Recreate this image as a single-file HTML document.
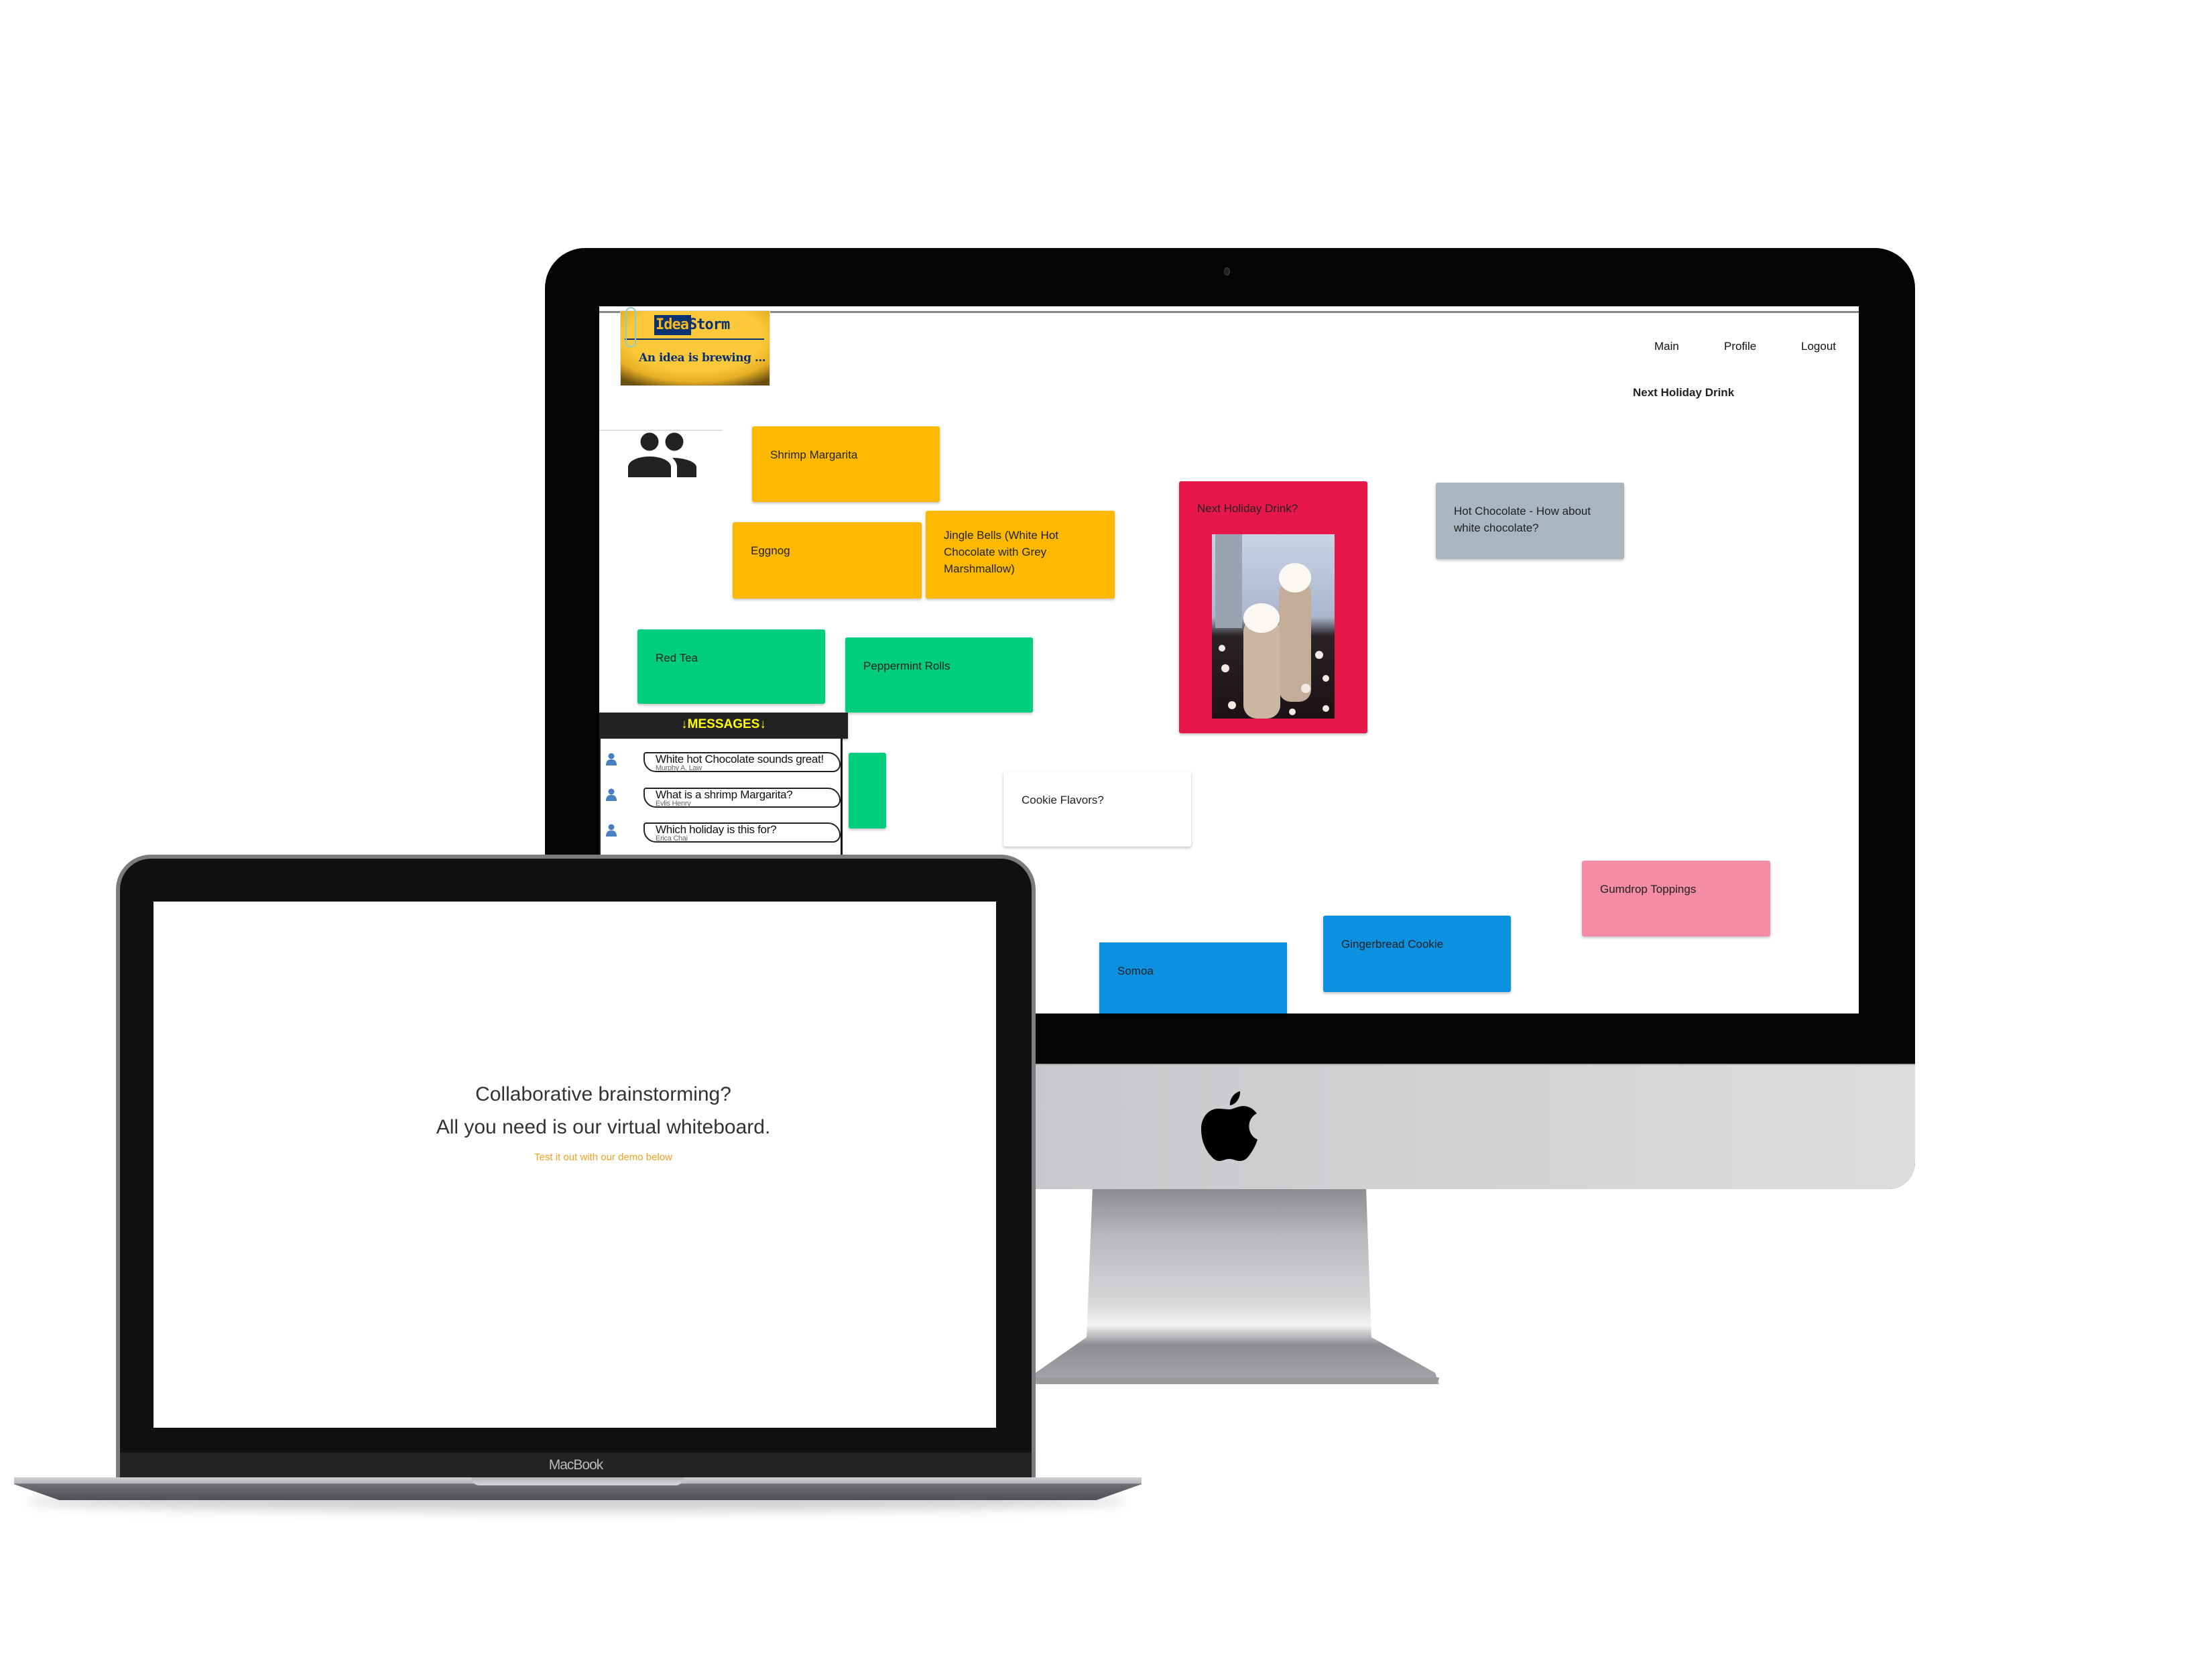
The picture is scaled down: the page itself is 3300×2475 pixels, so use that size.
<!DOCTYPE html>
<html><head><meta charset="utf-8"><style>
*{margin:0;padding:0;box-sizing:border-box}
body{width:3300px;height:2475px;background:#fff;position:relative;overflow:hidden;font-family:"Liberation Sans",Arial,sans-serif}
.a{position:absolute}
.n{position:absolute;font-size:17px;color:#222;padding:30px 27px;line-height:25px;box-shadow:0 2px 4px rgba(0,0,0,.25);border-radius:3px}
.y{background:#FDB900}.g{background:#00CE7C}.b{background:#0B91E0}
.msg{position:absolute;left:960px;width:294px;height:30px;border:2px solid #222;border-radius:6px 30px 18px 30px/6px 30px 18px 30px;font-size:17px;color:#111;padding-left:16px;line-height:17px;letter-spacing:-0.3px}
.msg small{display:block;font-size:11px;color:#666;line-height:10px}
.pi{position:absolute;left:904px;width:16px;height:20px}
</style></head><body>

<!-- iMac stand -->
<div class="a" style="left:1541px;top:1770px;width:606px;height:295px;background:linear-gradient(180deg,#8a8b8f 0%,#b7b8bc 25%,#d8d9db 60%,#f4f4f4 70%,#8d8e92 80%,#a7a8ac 100%);clip-path:polygon(89px 0,497px 0,505px 225px,600px 278px,606px 295px,0 295px,4px 278px,80px 225px);"></div>
<div class="a" style="left:1545px;top:2055px;width:602px;height:10px;background:#999;border-radius:0 0 20px 20px"></div>

<!-- iMac body -->
<div class="a" style="left:813px;top:370px;width:2044px;height:1404px;background:#040404;border-radius:60px 60px 40px 40px;overflow:hidden">
  <div class="a" style="left:0;top:1217px;width:2044px;height:187px;background:linear-gradient(90deg,#b9babe,#c9cacd 40%,#dcdddd);border-top:2px solid #aaa"></div>
</div>
<div class="a" style="left:1826px;top:399px;width:9px;height:12px;border-radius:50%;background:#222;border:1px solid #444"></div>
<svg class="a" style="left:1792px;top:1628px" width="84" height="104" viewBox="0 0 84 104"><path d="M58 0c1 9-6 20-15 21-1-9 6-19 15-21zM42 27c6 0 13-5 21-5 7 0 15 4 20 11-17 9-14 33 1 39-3 10-9 20-15 27-4 4-8 5-12 5-6 0-8-3-15-3s-9 3-15 3c-4 0-8-2-12-7C4 85 0 70 0 56 0 38 12 26 25 26c7 0 12 1 17 1z" fill="#000"/></svg>

<!-- iMac screen -->
<div class="a" style="left:894px;top:457px;width:1879px;height:1055px;background:#fff;overflow:hidden">
  <div class="a" style="left:0;top:7px;width:100%;height:3px;background:#888"></div>
</div>
<!-- logo -->
<div class="a" style="left:925px;top:463px;width:224px;height:113px;background:radial-gradient(ellipse 75% 75% at 50% 35%,#FDC93A 60%,#E6AF25 80%,#6b5010 100%);border:1px solid #ddd"></div>
<div class="a" style="left:976px;top:470px;width:55px;height:30px;background:#0A3170"></div>
<div class="a" style="left:978px;top:470px;font:bold 22px 'DejaVu Sans Mono',monospace;color:#F7B81E;line-height:30px;letter-spacing:-1px">Idea<span style="color:#0A3170">Storm</span></div>
<div class="a" style="left:932px;top:505px;width:208px;height:2px;background:#0A3170"></div>
<div class="a" style="left:953px;top:524px;font:bold 17px 'DejaVu Serif',serif;color:#0A3170;letter-spacing:-0.5px">An idea is brewing ...</div>
<div class="a" style="left:933px;top:458px;width:16px;height:60px;border:2px solid #8cc;border-radius:8px"></div>

<div class="a" style="left:2468px;top:507px;font-size:17px;color:#111">Main</div>
<div class="a" style="left:2572px;top:507px;font-size:17px;color:#111">Profile</div>
<div class="a" style="left:2687px;top:507px;font-size:17px;color:#111">Logout</div>
<div class="a" style="left:2436px;top:576px;font-size:17px;font-weight:bold;color:#222">Next Holiday Drink</div>

<div class="a" style="left:894px;top:641px;width:184px;height:2px;background:#ddd"></div>
<svg class="a" style="left:937px;top:645px" width="102" height="67" viewBox="0 0 102 67"><circle cx="32" cy="14" r="13.5" fill="#222"/><circle cx="69" cy="14" r="13.5" fill="#222"/><path d="M0 67V52c0-10 16-16 32-16s32 6 32 16v15z" fill="#222"/><path d="M73 67V52c0-6-3-10-7-14 18 0 36 6 36 14v15z" fill="#222"/></svg>

<div class="n y" style="left:1122px;top:636px;width:280px;height:113px">Shrimp Margarita</div>
<div class="n y" style="left:1093px;top:779px;width:282px;height:114px">Eggnog</div>
<div class="n y" style="left:1381px;top:762px;width:282px;height:131px;padding-top:24px">Jingle Bells (White Hot Chocolate with Grey Marshmallow)</div>
<div class="n g" style="left:951px;top:939px;width:280px;height:111px">Red Tea</div>
<div class="n g" style="left:1261px;top:951px;width:280px;height:112px">Peppermint Rolls</div>
<div class="n" style="left:1759px;top:718px;width:281px;height:376px;background:#E8174A;padding-top:28px">Next Holiday Drink?</div>
<svg class="a" style="left:1808px;top:797px" width="183" height="275" viewBox="0 0 183 275">
<defs><linearGradient id="bg" x1="0" y1="0" x2="0" y2="1"><stop offset="0" stop-color="#c9d3e6"/><stop offset=".45" stop-color="#aab6cc"/><stop offset=".55" stop-color="#2a2326"/><stop offset="1" stop-color="#1a1214"/></linearGradient></defs>
<rect width="183" height="275" fill="url(#bg)"/>
<rect x="5" y="0" width="40" height="140" fill="#9aa3b2"/>
<rect x="100" y="70" width="48" height="180" rx="18" fill="#c4ad98"/>
<ellipse cx="124" cy="65" rx="24" ry="22" fill="#fbf8f4"/>
<rect x="47" y="125" width="55" height="150" rx="20" fill="#cbb6a2"/>
<ellipse cx="74" cy="125" rx="27" ry="22" fill="#fbf8f4"/>
<g fill="#f2e8e4"><circle cx="20" cy="200" r="6"/><circle cx="160" cy="180" r="6"/><circle cx="140" cy="230" r="7"/><circle cx="30" cy="255" r="6"/><circle cx="170" cy="260" r="5"/><circle cx="15" cy="170" r="5"/><circle cx="120" cy="265" r="5"/><circle cx="170" cy="215" r="5"/></g>
</svg>
<div class="n" style="left:2142px;top:720px;width:281px;height:114px;background:#A9B5C0">Hot Chocolate - How about white chocolate?</div>
<div class="n" style="left:1497px;top:1151px;width:280px;height:112px;background:#fff">Cookie Flavors?</div>
<div class="n" style="left:2360px;top:1284px;width:281px;height:113px;background:#F58CA7">Gumdrop Toppings</div>
<div class="n b" style="left:1974px;top:1366px;width:280px;height:114px">Gingerbread Cookie</div>
<div class="n b" style="left:1640px;top:1406px;width:280px;height:106px;border-radius:0">Somoa</div>
<div class="n g" style="left:1266px;top:1123px;width:56px;height:113px;padding:0"></div>

<!-- messages -->
<div class="a" style="left:894px;top:1063px;width:371px;height:39px;background:#222;color:#ff0;font-size:19px;font-weight:bold;text-align:center;line-height:36px;box-shadow:0 2px 3px rgba(0,0,0,.3)">↓MESSAGES↓</div>
<div class="a" style="left:894px;top:1102px;width:363px;height:410px;border-left:2px solid #222;border-right:3px solid #111;background:#fff"></div>
<div class="msg" style="top:1122px">White hot Chocolate sounds great!<small>Murphy A. Law</small></div>
<div class="msg" style="top:1175px">What is a shrimp Margarita?<small>Evlis Henry</small></div>
<div class="msg" style="top:1227px">Which holiday is this for?<small>Erica Chai</small></div>
<svg class="pi" style="top:1123px" viewBox="0 0 16 20"><circle cx="8" cy="5" r="4.5" fill="#4a7fc1"/><path d="M0 19c0-7 3-9 8-9s8 2 8 9z" fill="#4a7fc1"/></svg>
<svg class="pi" style="top:1176px" viewBox="0 0 16 20"><circle cx="8" cy="5" r="4.5" fill="#4a7fc1"/><path d="M0 19c0-7 3-9 8-9s8 2 8 9z" fill="#4a7fc1"/></svg>
<svg class="pi" style="top:1229px" viewBox="0 0 16 20"><circle cx="8" cy="5" r="4.5" fill="#4a7fc1"/><path d="M0 19c0-7 3-9 8-9s8 2 8 9z" fill="#4a7fc1"/></svg>

<!-- MacBook -->
<div class="a" style="left:40px;top:2225px;width:1640px;height:30px;border-radius:50%;background:rgba(0,0,0,.18);filter:blur(8px)"></div>
<div class="a" style="left:173px;top:1275px;width:1372px;height:940px;background:#7b7c80;border-radius:52px 52px 0 0"></div>
<div class="a" style="left:179px;top:1281px;width:1360px;height:934px;background:#131110;border-radius:46px 46px 0 0"></div>
<div class="a" style="left:179px;top:2167px;width:1360px;height:40px;background:#232323"></div>
<div class="a" style="left:229px;top:1345px;width:1257px;height:785px;background:#fff"></div>
<div class="a" style="left:400px;top:1608px;width:1000px;text-align:center;font-size:30px;color:#333;line-height:49px">Collaborative brainstorming?<br>All you need is our virtual whiteboard.</div>
<div class="a" style="left:400px;top:1718px;width:1000px;text-align:center;font-size:15px;color:#F5A020">Test it out with our demo below</div>
<div class="a" style="left:179px;top:2174px;width:1360px;text-align:center;font-size:21px;color:#bbb;letter-spacing:-1px">MacBook</div>
<div class="a" style="left:21px;top:2204px;width:1682px;height:34px;background:linear-gradient(180deg,#d0d0d4 0,#b9babe 25%,#6e6e74 30%,#4f4f55 100%);clip-path:polygon(0 0,100% 0,100% 30%,96% 100%,4% 100%,0 30%)"></div>
<div class="a" style="left:703px;top:2204px;width:317px;height:12px;background:linear-gradient(180deg,#b4b5b9,#d6d6da);border-radius:0 0 40px 40px"></div>
</body></html>
